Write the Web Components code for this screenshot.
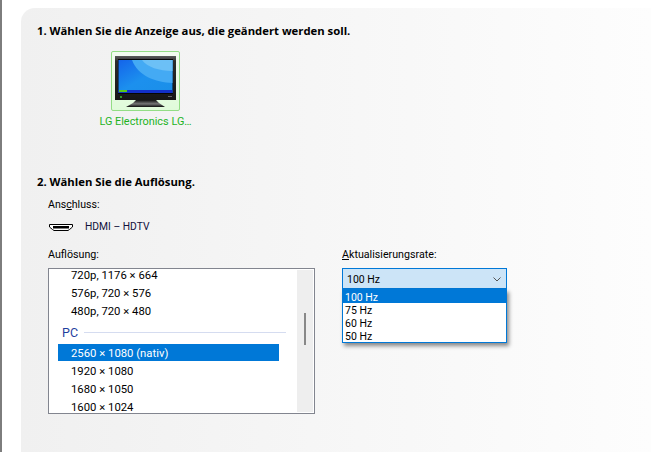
<!DOCTYPE html>
<html lang="de">
<head>
<meta charset="utf-8">
<style>
  html, body { margin: 0; height: 100%; overflow: hidden; background: #fff; }
  body { font: 11.3px Roboto, "Liberation Sans", sans-serif; color: #000; }
</style>
</head>
<body>
<res-page>
  <res-heading>1. Wählen Sie die Anzeige aus, die geändert werden soll.</res-heading>
  <res-display label="LG Electronics LG…"></res-display>
  <res-heading class="second">2. Wählen Sie die Auflösung.</res-heading>
  <res-connector></res-connector>
  <res-settings></res-settings>
</res-page>

<script>
class ResPage extends HTMLElement {
  constructor() {
    super();
    this.attachShadow({ mode: "open" });
  }

  connectedCallback() {
    this.shadowRoot.innerHTML = `
      <style>
        :host {
          display: flex;
          width: 651px;
          height: 452px;
          box-sizing: border-box;
          border-left: 2px solid #7d7d7d;
          padding: 8px 0 0 19px;
          overflow: hidden;
        }

        .panel {
          flex: 1;
          display: flex;
          flex-direction: column;
          padding: 15px 0 0 16px;
          border-top-left-radius: 14px;
          background: linear-gradient(90deg, #f0f0f0, #fdfdfd);
        }
      </style>
      <div class="panel"><slot></slot></div>
    `;
  }
}

class ResHeading extends HTMLElement {
  constructor() {
    super();
    this.attachShadow({ mode: "open" });
  }

  connectedCallback() {
    this.shadowRoot.innerHTML = `
      <style>
        :host {
          display: block;
          height: 16px;
          line-height: 16px;
          font-family: "Open Sans", sans-serif;
          font-size: 11.3px;
          font-weight: 700;
          white-space: nowrap;
          color: #000;
        }

        :host(.second) {
          margin-top: 44px;
        }
      </style>
      <slot></slot>
    `;
  }
}

class ResDisplay extends HTMLElement {
  constructor() {
    super();
    this.attachShadow({ mode: "open" });
  }

  connectedCallback() {
    const label = this.getAttribute("label") || "";

    this.shadowRoot.innerHTML = `
      <style>
        :host {
          display: flex;
          flex-direction: column;
          align-items: center;
          width: 117px;
          margin: 12px 0 0 50px;
        }

        .tile {
          box-sizing: border-box;
          width: 69px;
          height: 60px;
          padding: 4px 0 0 3px;
          border: 1px solid #93dd85;
          border-radius: 2px;
          background: linear-gradient(#f2fbf0, #e0fbda);
        }

        svg {
          display: block;
        }

        .label {
          margin-top: 3px;
          line-height: 16px;
          font-size: 10.9px;
          white-space: nowrap;
          color: #1fb31f;
        }
      </style>

      <div class="tile">
        <svg width="62" height="51" viewBox="0 0 62 51">
          <defs>
            <linearGradient id="sky" x1="0" y1="0" x2="1" y2="1">
              <stop offset="0" stop-color="#1464ea"/>
              <stop offset="0.5" stop-color="#1c90ee"/>
              <stop offset="1" stop-color="#1a8fe8"/>
            </linearGradient>
            <linearGradient id="bezel" x1="0" y1="0" x2="0" y2="1">
              <stop offset="0" stop-color="#5a5a5a"/>
              <stop offset="0.12" stop-color="#2c2c2c"/>
              <stop offset="1" stop-color="#161616"/>
            </linearGradient>
            <linearGradient id="foot" x1="0" y1="0" x2="0" y2="1">
              <stop offset="0" stop-color="#111"/>
              <stop offset="0.55" stop-color="#777"/>
              <stop offset="1" stop-color="#0c0c0c"/>
            </linearGradient>
          </defs>
          <rect width="61" height="44" fill="url(#bezel)"/>
          <rect x="3" y="3" width="55" height="35" fill="#060606"/>
          <rect x="3.5" y="4" width="54" height="33" fill="url(#sky)"/>
          <path d="M17 4H57.5V27C40 26 23 20 17 4Z" fill="#44aaf4"/>
          <path d="M27 4H57.5V15C44 15 32 11 27 4Z" fill="#6cc0f6"/>
          <rect x="3.5" y="34" width="54" height="3" fill="#1230c8"/>
          <rect x="4" y="34" width="8" height="2" fill="#58c81c"/>
          <rect x="5" y="40" width="2" height="2" fill="#2e9a2a"/>
          <rect x="53" y="40" width="4" height="1" fill="#666"/>
          <path d="M21 44H41L44 47L50 51H11L18 47Z" fill="url(#foot)"/>
        </svg>
      </div>
      <div class="label">${label}</div>
    `;
  }
}

class ResConnector extends HTMLElement {
  constructor() {
    super();
    this.attachShadow({ mode: "open" });
  }

  connectedCallback() {
    this.shadowRoot.innerHTML = `
      <style>
        :host {
          display: block;
          margin: 7px 0 0 11px;
          line-height: 16px;
          font-size: 10.6px;
          white-space: nowrap;
        }

        .row {
          display: flex;
          align-items: center;
          gap: 12px;
          margin-top: 6px;
          padding-left: 1px;
          font-size: 10.3px;
          color: #10103c;
        }

        svg {
          display: block;
        }
      </style>

      <div>Ans<u>c</u>hluss:</div>
      <div class="row">
        <svg width="24" height="9" viewBox="0 0 24 9">
          <path d="M.5 1.5H23.5V4L20.5 6.5L19 7.5H5L3.5 6.5L.5 4Z" fill="#fff" stroke="#000"/>
          <rect x="4" y="3" width="16" height="2.5" fill="#000"/>
        </svg>
        <span>HDMI – HDTV</span>
      </div>
    `;
  }
}

class ResSettings extends HTMLElement {
  constructor() {
    super();
    this.attachShadow({ mode: "open" });
  }

  connectedCallback() {
    this.shadowRoot.innerHTML = `
      <style>
        :host {
          display: flex;
          gap: 27px;
          margin: 11px 0 0 11px;
        }

        .title {
          height: 16px;
          line-height: 18px;
          margin-bottom: 6px;
          font-size: 10.7px;
          white-space: nowrap;
        }
      </style>

      <div>
        <div class="title">Auf<u>l</u>ösung:</div>
        <res-listbox></res-listbox>
      </div>
      <div>
        <div class="title"><u>A</u>ktualisierungsrate:</div>
        <res-combo value="100 Hz" options="100 Hz,75 Hz,60 Hz,50 Hz"></res-combo>
      </div>
    `;
  }
}

class ResListbox extends HTMLElement {
  constructor() {
    super();
    this.attachShadow({ mode: "open" });
  }

  connectedCallback() {
    const top = ["720p, 1176 × 664", "576p, 720 × 576", "480p, 720 × 480"];
    const pc = ["1920 × 1080", "1680 × 1050", "1600 × 1024"];
    const rows = (list) => list.map((t) => `<div class="row">${t}</div>`).join("");

    this.shadowRoot.innerHTML = `
      <style>
        :host {
          display: flex;
          box-sizing: border-box;
          width: 267px;
          height: 146px;
          padding: 1px;
          border: 1px solid #82858f;
          background: #fff;
        }

        .view {
          flex: 1;
          overflow: hidden;
        }

        .items {
          margin-top: -4px;
          padding-left: 8px;
        }

        .row {
          width: 221px;
          box-sizing: border-box;
          height: 18px;
          line-height: 20px;
          padding-left: 13px;
          white-space: nowrap;
        }

        .group {
          display: flex;
          align-items: center;
          gap: 6px;
          width: 224px;
          height: 24px;
          padding-left: 4px;
          font-size: 12.5px;
          color: #1f3f9e;
        }

        .group i {
          flex: 1;
          height: 1px;
          background: #d5dcf0;
        }

        .selected {
          height: 17px;
          margin-bottom: 1px;
          background: #0078d7;
          color: #fff;
        }

        .track {
          flex: none;
          display: flex;
          justify-content: center;
          width: 16px;
          background: #eee;
        }

        .thumb {
          width: 2px;
          height: 32px;
          margin-top: 43px;
          background: #888;
        }
      </style>

      <div class="view">
        <div class="items">
          ${rows(top)}
          <div class="group">PC<i></i></div>
          <div class="row selected">2560 × 1080 (nativ)</div>
          ${rows(pc)}
        </div>
      </div>
      <div class="track"><div class="thumb"></div></div>
    `;
  }
}

class ResCombo extends HTMLElement {
  constructor() {
    super();
    this.attachShadow({ mode: "open" });
  }

  connectedCallback() {
    const value = this.getAttribute("value") || "";
    const options = (this.getAttribute("options") || "").split(",");

    this.shadowRoot.innerHTML = `
      <style>
        :host {
          display: block;
          position: relative;
          width: 165px;
          font-size: 10.5px;
        }

        .field {
          display: flex;
          align-items: center;
          justify-content: space-between;
          box-sizing: border-box;
          height: 21px;
          padding: 2px 5px 0 4px;
          border: 1px solid #0078d7;
          background: #cce4f7;
        }

        svg {
          display: block;
        }

        .menu {
          position: absolute;
          top: 21px;
          left: 0;
          width: 165px;
          box-sizing: border-box;
          border: 1px solid #0078d7;
          background: #fff;
          box-shadow: 2px 3px 4px rgba(0, 0, 0, 0.45);
        }

        .option {
          height: 12px;
          padding: 1px 0 0 2px;
          line-height: 13px;
        }

        .option:first-child {
          background: #0078d7;
          color: #fff;
        }
      </style>

      <div class="field">
        <span>${value}</span>
        <svg width="8" height="5" viewBox="0 0 8 5">
          <path d="M.5 .5L4 4L7.5 .5" fill="none" stroke="#555"/>
        </svg>
      </div>
      <div class="menu">
        ${options.map((o) => `<div class="option">${o}</div>`).join("")}
      </div>
    `;
  }
}

customElements.define("res-page", ResPage);
customElements.define("res-heading", ResHeading);
customElements.define("res-display", ResDisplay);
customElements.define("res-connector", ResConnector);
customElements.define("res-settings", ResSettings);
customElements.define("res-listbox", ResListbox);
customElements.define("res-combo", ResCombo);
</script>
</body>
</html>
